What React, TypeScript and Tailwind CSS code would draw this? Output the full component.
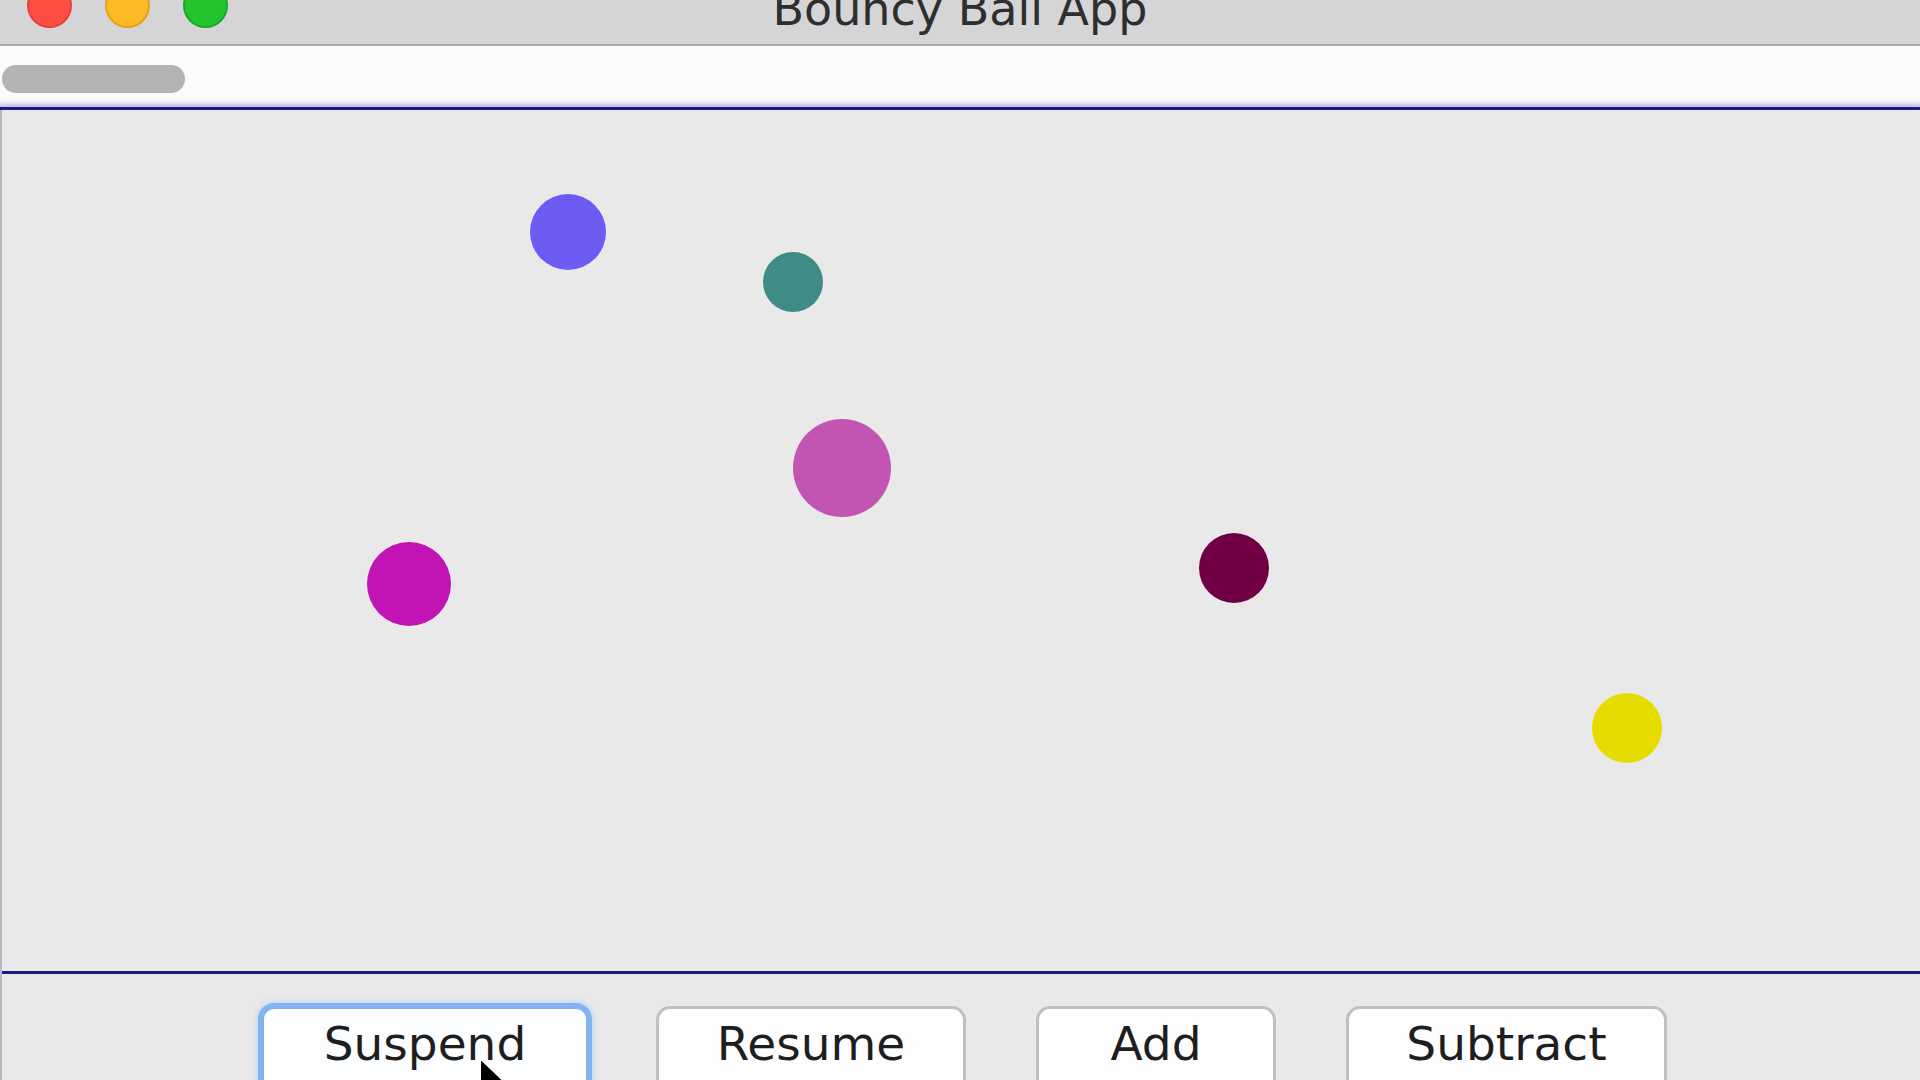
import React from "react";

type Ball = { left: number; top: number; d: number; color: string };

const balls: Ball[] = [
  { left: 528, top: 84, d: 76, color: "#6b5cf2" },
  { left: 761, top: 142, d: 60, color: "#3f8c86" },
  { left: 791, top: 309, d: 98, color: "#c254b2" },
  { left: 365, top: 432, d: 84, color: "#c214b4" },
  { left: 1197, top: 423, d: 70, color: "#700043" },
  { left: 1590, top: 583, d: 70, color: "#e6dc00" },
];

export default function App() {
  return (
    <div
      className="relative w-[1920px] h-[1080px] overflow-hidden flex flex-col bg-[#e9e9e9]"
      style={{ fontFamily: '"DejaVu Sans", "Liberation Sans", sans-serif' }}
    >
      {/* Title bar */}
      <div className="h-[46px] shrink-0 grid grid-cols-[1fr_auto_1fr] items-start bg-[#d5d4d6] border-b-2 border-[#a9a9a9] overflow-hidden">
        <div className="flex items-start gap-[33px] pl-[27px] -mt-[17px]">
          <div className="w-[45px] h-[45px] rounded-full bg-[#fd4e41] border-2 border-[#e0443a]" />
          <div className="w-[45px] h-[45px] rounded-full bg-[#fdb926] border-2 border-[#e3a21e]" />
          <div className="w-[45px] h-[45px] rounded-full bg-[#22c52e] border-2 border-[#1ba828]" />
        </div>
        <div className="text-[46px] leading-[46px] -mt-[14px] text-[#2e2e2e] whitespace-nowrap">
          Bouncy Ball App
        </div>
        <div />
      </div>

      {/* Toolbar */}
      <div className="h-[61px] shrink-0 bg-[#fbfbfb] pt-[19px] pl-[2px]">
        <div className="w-[183px] h-[28px] rounded-full bg-[#b4b4b4]" />
      </div>

      {/* Blue divider */}
      <div className="h-[3px] shrink-0 bg-[#1c1c80] shadow-[0_0_5px_3px_#b8b8f6]" />

      {/* Body */}
      <div className="flex-1 flex flex-col border-l-2 border-[#b8b8b8]">
        {/* Canvas */}
        <div className="relative h-[861px] bg-[#e9e9e9]">
          {balls.map((b, i) => (
            <div
              key={i}
              className="absolute rounded-full"
              style={{
                left: b.left,
                top: b.top,
                width: b.d,
                height: b.d,
                backgroundColor: b.color,
              }}
            />
          ))}
        </div>

        {/* Blue divider */}
        <div className="h-[3px] shrink-0 bg-[#1c1c80] shadow-[0_0_5px_3px_#b8b8f6]" />

        {/* Button panel */}
        <div className="flex-1 flex items-start pl-[256px] pt-[29px] bg-[#e9e9e9]">
          <div className="w-[334px] h-[100px] shrink-0 rounded-[16px] border-[6px] border-[#84b4f0] bg-[#fcfdff] pt-[11px] text-center text-[47px] leading-[47px] text-[#1e1e1e] shadow-[0_0_5px_2px_#c4daf8]">
            Suspend
          </div>
          <div className="ml-[64px] mt-[3px] w-[310px] h-[100px] shrink-0 rounded-[14px] border-[3px] border-[#c0c0c0] bg-[#fdfdfd] pt-[11px] text-center text-[47px] leading-[47px] text-[#1e1e1e]">
            Resume
          </div>
          <div className="ml-[70px] mt-[3px] w-[240px] h-[100px] shrink-0 rounded-[14px] border-[3px] border-[#c0c0c0] bg-[#fdfdfd] pt-[11px] text-center text-[47px] leading-[47px] text-[#1e1e1e]">
            Add
          </div>
          <div className="ml-[70px] mt-[3px] w-[321px] h-[100px] shrink-0 rounded-[14px] border-[3px] border-[#c0c0c0] bg-[#fdfdfd] pt-[11px] text-center text-[47px] leading-[47px] text-[#1e1e1e]">
            Subtract
          </div>
        </div>
      </div>

      {/* Mouse cursor */}
      <svg
        className="absolute left-[478px] top-[1056px]"
        width="34"
        height="50"
        viewBox="0 0 17 25"
      >
        <path
          d="M1 1 L1 19 L5.5 14.5 L8.5 22 L11 21 L8 13.5 L14 13.5 Z"
          fill="#000"
          stroke="#fff"
          strokeWidth="1"
          strokeLinejoin="round"
        />
      </svg>
    </div>
  );
}
